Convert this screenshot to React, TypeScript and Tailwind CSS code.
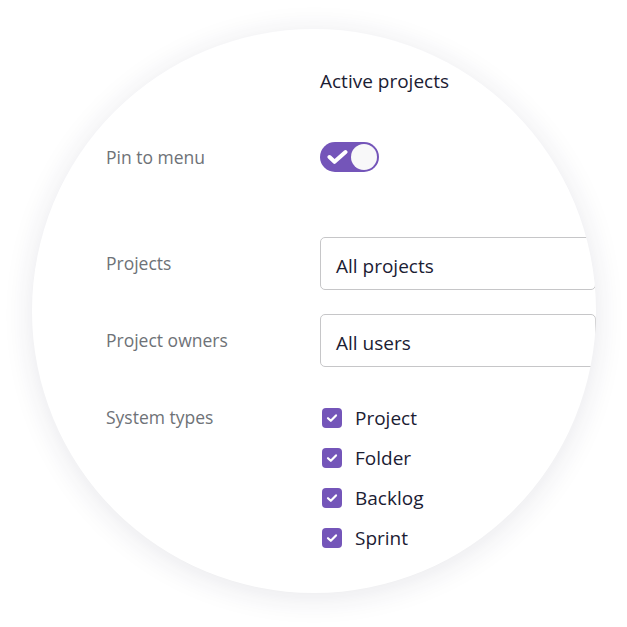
import React, { useState } from 'react';

const types = ['Project', 'Folder', 'Backlog', 'Sprint'];

const Toggle = ({ on, onChange }: { on: boolean; onChange: () => void }) => (
  <button
    onClick={onChange}
    className={`relative flex items-center w-[59px] h-[30px] rounded-full ${on ? 'bg-[#7455b9]' : 'bg-[#c9c9d1]'}`}
  >
    {on && (
      <svg className="absolute left-[7px] top-[7px]" width="21" height="16" viewBox="0 0 21 16" fill="none">
        <path d="M2.5 8 L7.5 12.8 L18.5 3" stroke="white" strokeWidth="4" strokeLinecap="round" strokeLinejoin="round" />
      </svg>
    )}
    <span
      className={`absolute top-[2px] w-[26px] h-[26px] rounded-full bg-[#f8f8f9] ${on ? 'right-[2px]' : 'left-[2px]'}`}
    />
  </button>
);

const Check = () => (
  <span className="flex items-center justify-center w-[20px] h-[20px] rounded-[4px] bg-[#7455b9]">
    <svg width="12" height="10" viewBox="0 0 12 10" fill="none">
      <path d="M2 5.2 L4.8 7.8 L10 2.4" stroke="white" strokeWidth="2.2" strokeLinecap="round" strokeLinejoin="round" />
    </svg>
  </span>
);

export default function App() {
  const [pinned, setPinned] = useState(true);

  return (
    <div className="w-[627px] h-[627px] bg-white overflow-hidden" style={{ fontFamily: '"Open Sans", "Noto Sans", sans-serif' }}>
      <div className="ml-[32px] mt-[29px] w-[564px] h-[564px] rounded-full overflow-hidden bg-white shadow-[0_4px_30px_rgba(40,40,70,0.11)]">
        <div className="pl-[74px] pt-[40px]">
          {/* header */}
          <div className="flex">
            <div className="w-[214px] shrink-0" />
            <div className="h-[24px] leading-[24px] text-[19px] text-[#1b2033]">Active projects</div>
          </div>

          {/* pin */}
          <div className="flex items-center mt-[49px] h-[30px]">
            <div className="w-[214px] shrink-0 text-[17.5px] text-[#6e7277]">Pin to menu</div>
            <Toggle on={pinned} onChange={() => setPinned(!pinned)} />
          </div>

          {/* projects */}
          <div className="flex items-center mt-[65px]">
            <div className="w-[214px] shrink-0 text-[17.5px] text-[#6e7277]">Projects</div>
            <div className="flex items-center w-[430px] h-[53px] px-[15px] pt-[5px] border border-[#c6c6c8] rounded-[5px] text-[19px] text-[#1b2033]">
              All projects
            </div>
          </div>

          {/* owners */}
          <div className="flex items-center mt-[24px]">
            <div className="w-[214px] shrink-0 text-[17.5px] text-[#6e7277]">Project owners</div>
            <div className="flex items-center w-[430px] h-[53px] px-[15px] pt-[5px] border border-[#c6c6c8] rounded-[5px] text-[19px] text-[#1b2033]">
              All users
            </div>
          </div>

          {/* system types */}
          <div className="flex mt-[31px]">
            <div className="w-[214px] shrink-0 h-[38px] flex items-center text-[17.5px] text-[#6e7277]">System types</div>
            <div className="flex flex-col">
              {types.map((t) => (
                <label key={t} className="flex items-center h-[40px] pl-[2px]">
                  <Check />
                  <span className="ml-[13px] text-[19px] text-[#1b2033]">{t}</span>
                </label>
              ))}
            </div>
          </div>
        </div>
      </div>
    </div>
  );
}
